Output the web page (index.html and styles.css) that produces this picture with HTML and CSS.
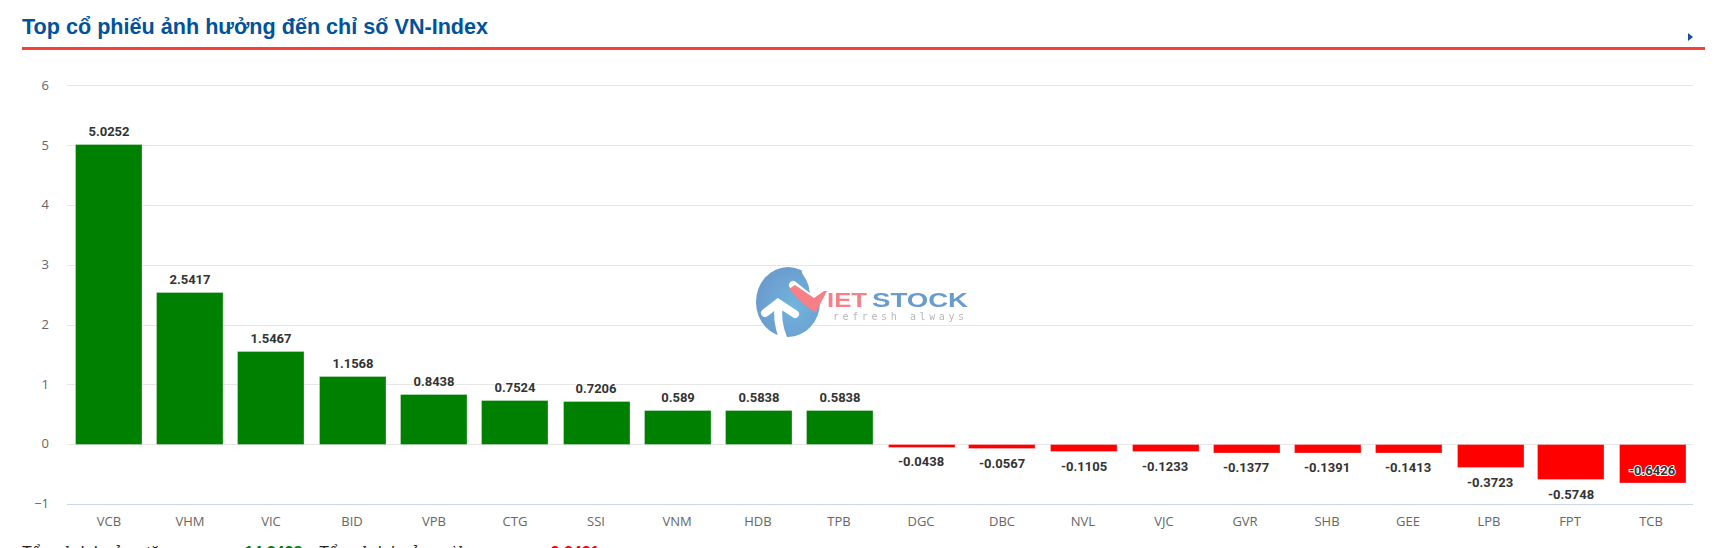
FILE: index.html
```html
<!DOCTYPE html>
<html lang="vi">
<head>
<meta charset="utf-8">
<title>Top cổ phiếu ảnh hưởng đến chỉ số VN-Index</title>
<link rel="stylesheet" href="styles.css">
</head>
<body>
<main class="panel">
  <header class="panel-head">
    <h2 class="panel-title">Top cổ phiếu ảnh hưởng đến chỉ số VN-Index</h2>
    <span class="panel-arrow"></span>
  </header>
  <svg class="chart" width="1717" height="490" viewBox="0 50 1717 490">
    <defs>
      <radialGradient id="globe" cx="0.6" cy="0.55" r="0.6">
        <stop offset="0" stop-color="#71b5de"/>
        <stop offset="1" stop-color="#6a9bcd"/>
      </radialGradient>
    </defs>
    <g class="grid">
      <line x1="67" x2="1693" y1="85.5" y2="85.5"/>
      <line x1="67" x2="1693" y1="145.5" y2="145.5"/>
      <line x1="67" x2="1693" y1="205.5" y2="205.5"/>
      <line x1="67" x2="1693" y1="265.5" y2="265.5"/>
      <line x1="67" x2="1693" y1="325.5" y2="325.5"/>
      <line x1="67" x2="1693" y1="384.5" y2="384.5"/>
      <line x1="67" x2="1693" y1="444.5" y2="444.5"/>
    </g>
    <line class="axis" x1="67" x2="1693" y1="504.5" y2="504.5"/>
    <g class="ylabels">
      <text x="49" y="90">6</text>
      <text x="49" y="150">5</text>
      <text x="49" y="209">4</text>
      <text x="49" y="269">3</text>
      <text x="49" y="329">2</text>
      <text x="49" y="389">1</text>
      <text x="49" y="448">0</text>
      <text x="49" y="508">−1</text>
    </g>
    <g class="bars up">
      <rect x="75.5" y="144.5" width="66.5" height="300"/>
      <rect x="156.5" y="292.5" width="66.5" height="152"/>
      <rect x="237.5" y="351.5" width="66.5" height="93"/>
      <rect x="319.5" y="376.5" width="66.5" height="68"/>
      <rect x="400.5" y="394.5" width="66.5" height="50"/>
      <rect x="481.5" y="400.5" width="66.5" height="44"/>
      <rect x="563.5" y="401.5" width="66.5" height="43"/>
      <rect x="644.5" y="410.5" width="66.5" height="34"/>
      <rect x="725.5" y="410.5" width="66.5" height="34"/>
      <rect x="806.5" y="410.5" width="66.5" height="34"/>
    </g>
    <g class="bars down">
      <rect x="888.5" y="444.5" width="66.5" height="3"/>
      <rect x="968.5" y="444.5" width="66.5" height="4"/>
      <rect x="1050.5" y="444.5" width="66.5" height="7"/>
      <rect x="1132.5" y="444.5" width="66.5" height="7"/>
      <rect x="1213.5" y="444.5" width="66.5" height="8.5"/>
      <rect x="1294.5" y="444.5" width="66.5" height="8.5"/>
      <rect x="1375.5" y="444.5" width="66.5" height="8.5"/>
      <rect x="1457.5" y="444.5" width="66.5" height="23"/>
      <rect x="1537.5" y="444.5" width="66.5" height="35"/>
      <rect x="1619.5" y="444.5" width="66.5" height="38.5"/>
    </g>
    <g class="logo">
      <ellipse cx="788" cy="302" rx="32" ry="35" fill="url(#globe)"/>
      <path class="logo-stroke" d="M779 304 Q776 320 783 338"/>
      <path class="logo-stroke" d="M765 313 L778 303 L795 314"/>
      <path class="logo-stroke" d="M806 272 Q816 285 813 300"/>
      <path class="logo-stroke" d="M793 285 L812 300 L822 290"/>
      <path class="logo-v" d="M789 289 L795 285 L814 298 L824 291 L827 291 L816 312 C809 310 800 301 789 289 Z"/>
      <text class="logo-word logo-iet" x="827" y="307" textLength="40" lengthAdjust="spacingAndGlyphs">IET</text>
      <text class="logo-word logo-stock" x="872" y="307" textLength="96" lengthAdjust="spacingAndGlyphs">STOCK</text>
      <text class="logo-tag" x="833" y="320">refresh always</text>
    </g>
    <g class="dlabels">
      <text x="109" y="136">5.0252</text>
      <text x="190" y="284">2.5417</text>
      <text x="271" y="343">1.5467</text>
      <text x="353" y="368">1.1568</text>
      <text x="434" y="386">0.8438</text>
      <text x="515" y="392">0.7524</text>
      <text x="596" y="393">0.7206</text>
      <text x="678" y="402">0.589</text>
      <text x="759" y="402">0.5838</text>
      <text x="840" y="402">0.5838</text>
      <text x="921" y="466">-0.0438</text>
      <text x="1002" y="468">-0.0567</text>
      <text x="1084" y="471">-0.1105</text>
      <text x="1165" y="471">-0.1233</text>
      <text x="1246" y="472">-0.1377</text>
      <text x="1327" y="472">-0.1391</text>
      <text x="1408" y="472">-0.1413</text>
      <text x="1490" y="487">-0.3723</text>
      <text x="1571" y="499">-0.5748</text>
      <text x="1652" y="475">-0.6426</text>
    </g>
    <g class="xlabels">
      <text x="109" y="526">VCB</text>
      <text x="190" y="526">VHM</text>
      <text x="271" y="526">VIC</text>
      <text x="352" y="526">BID</text>
      <text x="434" y="526">VPB</text>
      <text x="515" y="526">CTG</text>
      <text x="596" y="526">SSI</text>
      <text x="677" y="526">VNM</text>
      <text x="758" y="526">HDB</text>
      <text x="839" y="526">TPB</text>
      <text x="921" y="526">DGC</text>
      <text x="1002" y="526">DBC</text>
      <text x="1083" y="526">NVL</text>
      <text x="1164" y="526">VJC</text>
      <text x="1245" y="526">GVR</text>
      <text x="1327" y="526">SHB</text>
      <text x="1408" y="526">GEE</text>
      <text x="1489" y="526">LPB</text>
      <text x="1570" y="526">FPT</text>
      <text x="1651" y="526">TCB</text>
    </g>
  </svg>
  <p class="summary">
    <span class="sum-item">Tổng ảnh hưởng tăng: <b class="pos">14.3438</b></span>
    <span class="sum-item">Tổng ảnh hưởng giảm: <b class="neg">-2.3421</b></span>
  </p>
</main>
</body>
</html>
```
FILE: styles.css
```css
html, body {
  margin: 0;
  height: 548px;
  overflow: hidden;
  background: #fff;
}
.panel {
  font-family: "Liberation Sans", Arial, sans-serif;
}
.panel-head {
  display: flex;
  justify-content: space-between;
  align-items: flex-end;
  margin: 0 12px 0 22px;
  height: 47px;
  border-bottom: 3px solid #f44336;
}
.panel-title {
  margin: 0 0 7px;
  font-size: 21.6px;
  line-height: 26px;
  font-weight: bold;
  color: #00529c;
}
.panel-arrow {
  width: 0;
  height: 0;
  margin: 0 12px 6px 0;
  border-left: 5px solid #1a4fa0;
  border-top: 4px solid transparent;
  border-bottom: 4px solid transparent;
}
.chart {
  display: block;
}
.grid line {
  stroke: #e6e6e6;
  stroke-width: 1;
}
.axis {
  stroke: #ccd6eb;
  stroke-width: 1;
}
.ylabels text {
  font-family: "Open Sans", sans-serif;
  font-size: 13px;
  fill: #666;
  text-anchor: end;
}
.xlabels text {
  font-family: "Open Sans", sans-serif;
  font-size: 13px;
  fill: #666;
  text-anchor: middle;
}
.dlabels text {
  font-family: Roboto, sans-serif;
  font-size: 13px;
  font-weight: bold;
  fill: #333;
  text-anchor: middle;
  paint-order: stroke;
  stroke: #fff;
  stroke-width: 2px;
  stroke-linejoin: round;
}
.bars rect {
  stroke: rgba(255, 255, 255, 0.3);
  stroke-width: 1;
}
.up rect { fill: #008000; }
.down rect { fill: #ff0000; }
.logo {
  filter: blur(0.4px);
}
.logo-stroke {
  fill: none;
  stroke: #fff;
  stroke-width: 8;
  stroke-linecap: round;
  stroke-linejoin: miter;
}
.logo-v { fill: #f77f88; }
.logo-word {
  font-family: "Liberation Sans", sans-serif;
  font-size: 20px;
  font-weight: bold;
}
.logo-iet { fill: #f77f88; }
.logo-stock { fill: #6a9bcd; }
.logo-tag {
  font-family: "DejaVu Sans Mono", monospace;
  font-size: 10px;
  letter-spacing: 3.6px;
  fill: #b8b8b8;
}
.summary {
  display: flex;
  gap: 17px;
  margin: 3px 0 0 22px;
  font-size: 16px;
  line-height: 20px;
  color: #222;
}
.pos, .neg {
  margin-left: 58px;
}
.pos { color: #008000; }
.neg { color: #ff0000; }
```
